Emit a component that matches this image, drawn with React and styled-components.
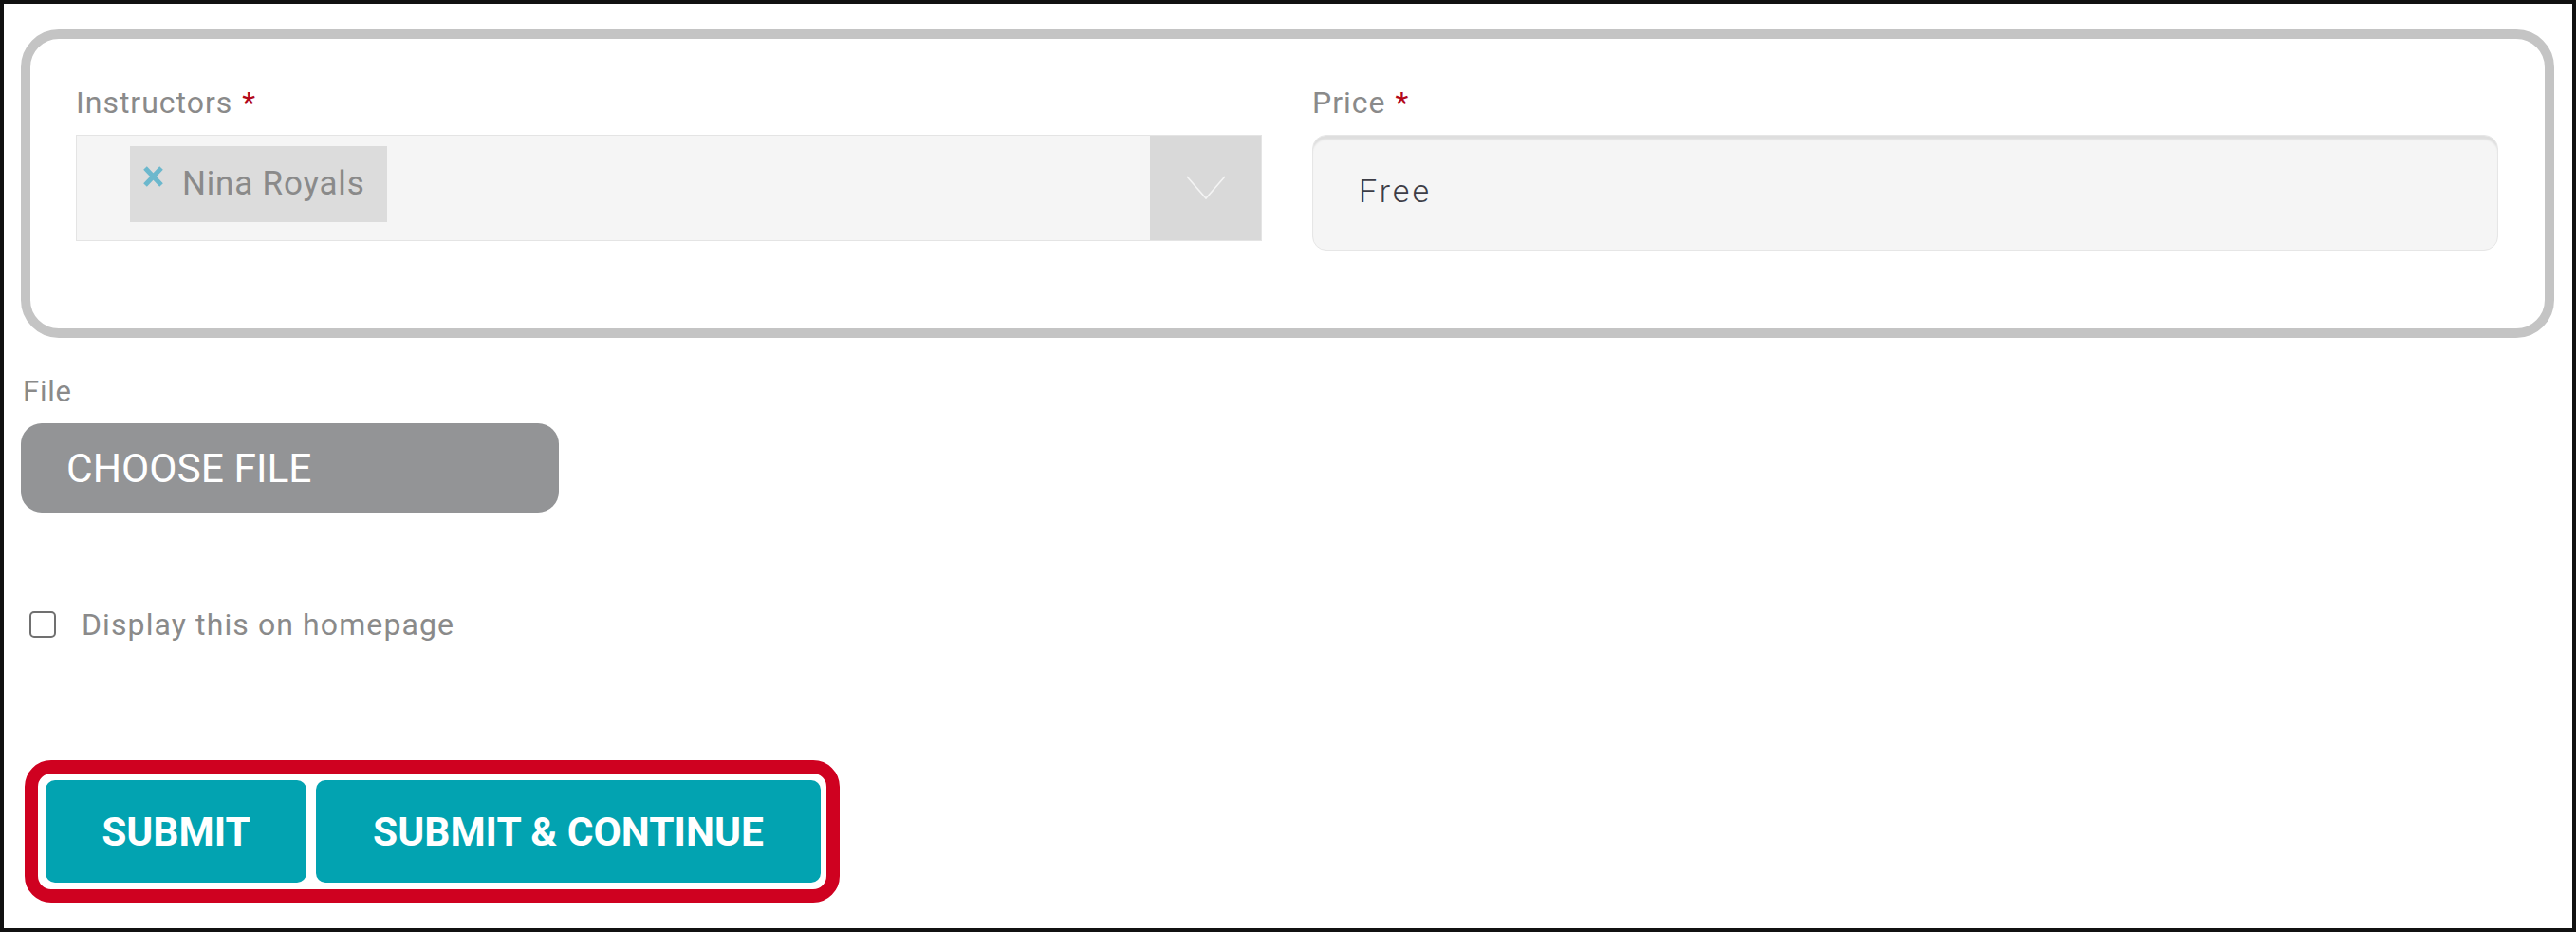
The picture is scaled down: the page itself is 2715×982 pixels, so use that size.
import React from 'react';
import styled, { createGlobalStyle } from 'styled-components';

const GlobalStyle = createGlobalStyle`
  html, body {
    margin: 0;
    padding: 0;
    background: #fff;
  }
  body {
    font-family: Roboto, 'Liberation Sans', Arial, sans-serif;
  }
  * {
    box-sizing: border-box;
  }
`;

const Frame = styled.div`
  width: 2715px;
  height: 982px;
  border: 4px solid #111;
  padding: 27px 19px 0 18px;
  background: #fff;
`;

const FieldsPanel = styled.div`
  border: 10px solid #c4c4c4;
  border-radius: 40px;
  padding: 48px 49px 82px 48px;
  display: grid;
  grid-template-columns: 1fr 1fr;
  column-gap: 53px;
  align-items: start;
`;

const Field = styled.div`
  display: flex;
  flex-direction: column;
`;

const Label = styled.label`
  display: block;
  font-size: 32px;
  line-height: 38px;
  letter-spacing: 1px;
  color: #8a8a8a;
  margin-bottom: 15px;

  span {
    color: #b3081b;
    margin-left: 10px;
  }
`;

const SelectBox = styled.div`
  height: 112px;
  display: flex;
  align-items: stretch;
  background: #f5f5f5;
  border: 1px solid #e4e4e4;
`;

const TagArea = styled.div`
  flex: 1;
  padding: 11px 0 0 56px;
`;

const Tag = styled.div`
  display: inline-flex;
  align-items: flex-start;
  height: 80px;
  padding: 20px 23px 0 13px;
  background: #dcdcdc;
  font-size: 35px;
  line-height: 40px;
  letter-spacing: 0.8px;
  color: #8a8a8a;

  svg {
    margin-top: 0;
    margin-right: 19px;
    flex: none;
  }
`;

const ArrowBox = styled.div`
  width: 117px;
  background: #d9d9d9;
  display: flex;
  align-items: center;
  justify-content: center;
`;

const PriceInput = styled.div`
  height: 122px;
  display: flex;
  align-items: center;
  padding: 0 0 4px 48px;
  background: #f5f5f5;
  border: 1px solid #e6e6e6;
  border-radius: 15px;
  box-shadow: inset 0 5px 2px -1px #dedede;
  font-size: 34px;
  font-weight: 300;
  letter-spacing: 3px;
  color: #3d3d46;
`;

const Section = styled.div`
  margin-top: ${(p) => p.$top || 0}px;
`;

const SmallLabel = styled.div`
  font-size: 31px;
  line-height: 36px;
  letter-spacing: 0.8px;
  color: #8a8a8a;
  padding-left: 2px;
`;

const ChooseFile = styled.button`
  display: flex;
  align-items: center;
  width: 567px;
  height: 94px;
  margin-top: 15px;
  padding: 0 0 0 48px;
  border: none;
  border-radius: 22px;
  background: #939496;
  color: #fff;
  font-family: Roboto, 'Liberation Sans', Arial, sans-serif;
  font-size: 42.5px;
  text-transform: uppercase;
  cursor: pointer;
`;

const CheckRow = styled.label`
  display: flex;
  align-items: center;
  height: 40px;
  padding-left: 9px;
  font-size: 32px;
  letter-spacing: 1.1px;
  color: #8a8a8a;
`;

const CheckInput = styled.input`
  appearance: none;
  width: 28px;
  height: 28px;
  margin: 0 27px 0 0;
  border: 2px solid #707070;
  border-radius: 5px;
  background: #fff;
`;

const ActionGroup = styled.div`
  display: inline-flex;
  gap: 10px;
  margin-left: 4px;
  padding: 7px 6px 7px 8px;
  border: 14px solid #cf0120;
  border-radius: 28px;
  background: #fff;
`;

const ActionButton = styled.button`
  height: 108px;
  padding: 0;
  border: none;
  border-radius: 10px;
  background: #02a3b1;
  color: #fff;
  font-family: Roboto, 'Liberation Sans', Arial, sans-serif;
  font-size: 42.5px;
  font-weight: 700;
  text-transform: uppercase;
  cursor: pointer;
`;

const RemoveIcon = () => (
  <svg width="23" height="24" viewBox="0 0 23 24">
    <path d="M3 3 L20 21 M20 3 L3 21" stroke="#6cb8cd" strokeWidth="5" strokeLinecap="butt" />
  </svg>
);

const Chevron = () => (
  <svg width="42" height="26" viewBox="0 0 42 26">
    <path d="M1 1 L21 24 L41 1" fill="none" stroke="#f4f4f4" strokeWidth="1.6" />
  </svg>
);

const App = () => {
  return (
    <>
      <GlobalStyle />
      <Frame>
        <FieldsPanel>
          <Field>
            <Label>
              Instructors<span>*</span>
            </Label>
            <SelectBox>
              <TagArea>
                <Tag>
                  <RemoveIcon />
                  Nina Royals
                </Tag>
              </TagArea>
              <ArrowBox>
                <Chevron />
              </ArrowBox>
            </SelectBox>
          </Field>
          <Field>
            <Label>
              Price<span>*</span>
            </Label>
            <PriceInput>Free</PriceInput>
          </Field>
        </FieldsPanel>

        <Section $top={39}>
          <SmallLabel>File</SmallLabel>
          <ChooseFile type="button">Choose File</ChooseFile>
        </Section>

        <Section $top={98}>
          <CheckRow>
            <CheckInput type="checkbox" />
            Display this on homepage
          </CheckRow>
        </Section>

        <Section $top={123}>
          <ActionGroup>
            <ActionButton type="button" style={{ width: 275 }}>Submit</ActionButton>
            <ActionButton type="button" style={{ width: 532 }}>Submit &amp; Continue</ActionButton>
          </ActionGroup>
        </Section>
      </Frame>
    </>
  );
};

export default App;
